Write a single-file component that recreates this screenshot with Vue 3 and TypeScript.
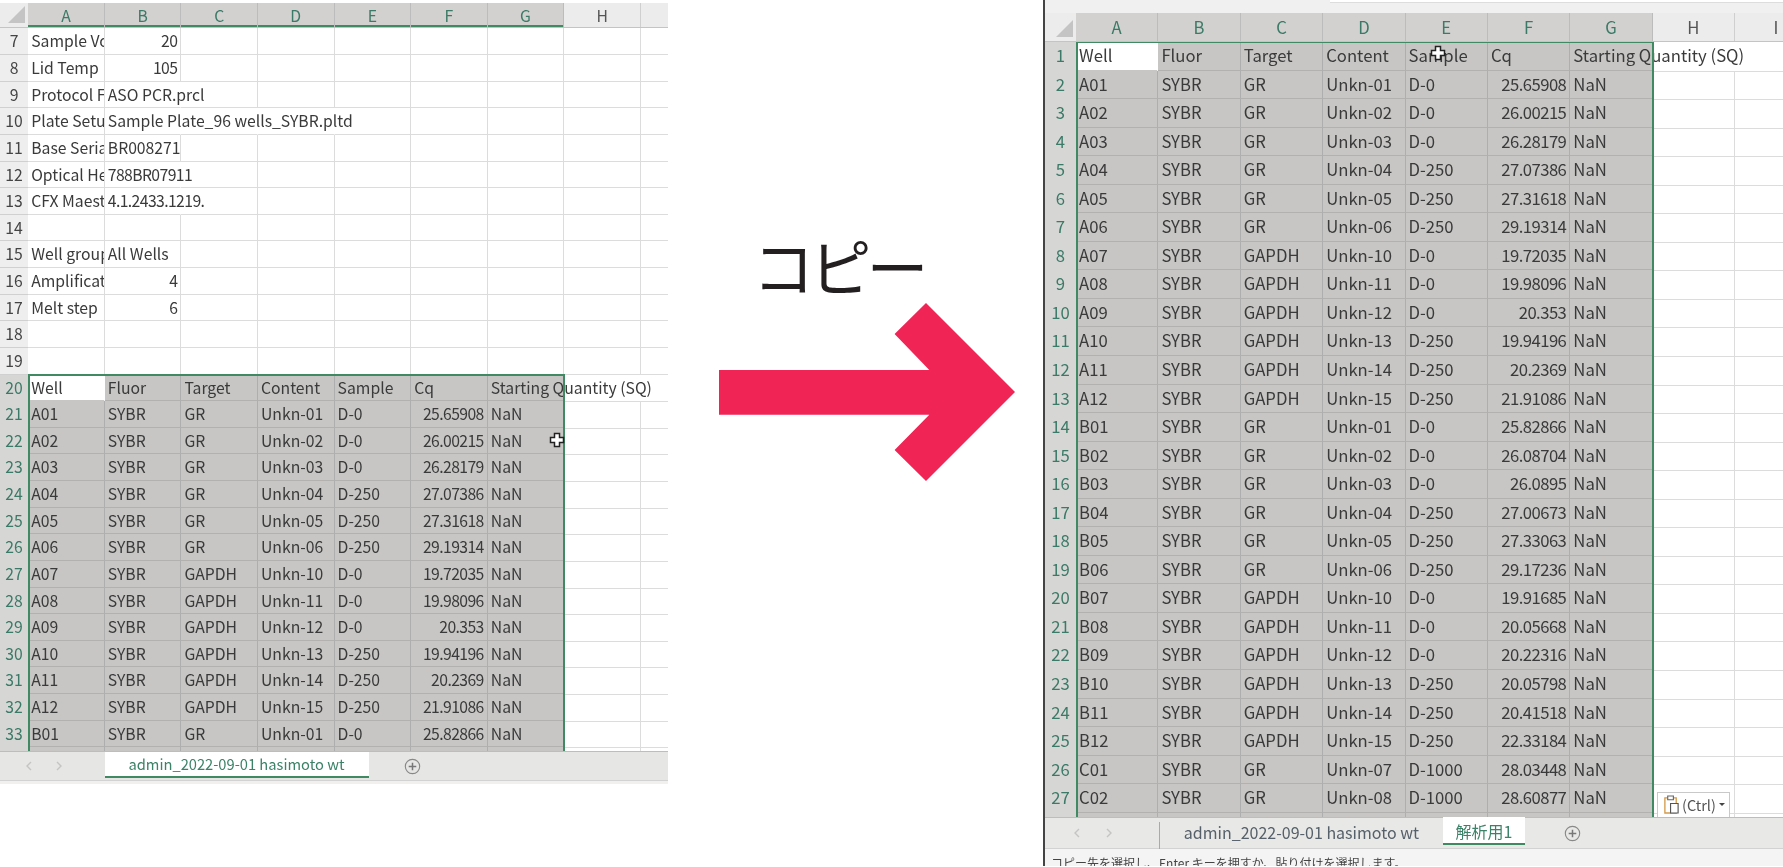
<script setup lang="ts">
type Sheet = {
  id: string
  cols: string[]
  colCount: number
  firstRow: number
  selStart: number
  charW: number
  colW: number
  rows: string[][]
  tabs: string[]
}

const d = (w: string, t: string, c: string, s: string, q: string) => [w, 'SYBR', t, `Unkn-${c}`, s, q, 'NaN']
const headers = ['Well', 'Fluor', 'Target', 'Content', 'Sample', 'Cq', 'Starting Quantity (SQ)']
const wells = [
  d('A01', 'GR', '01', 'D-0', '25.65908'),
  d('A02', 'GR', '02', 'D-0', '26.00215'),
  d('A03', 'GR', '03', 'D-0', '26.28179'),
  d('A04', 'GR', '04', 'D-250', '27.07386'),
  d('A05', 'GR', '05', 'D-250', '27.31618'),
  d('A06', 'GR', '06', 'D-250', '29.19314'),
  d('A07', 'GAPDH', '10', 'D-0', '19.72035'),
  d('A08', 'GAPDH', '11', 'D-0', '19.98096'),
  d('A09', 'GAPDH', '12', 'D-0', '20.353'),
  d('A10', 'GAPDH', '13', 'D-250', '19.94196'),
  d('A11', 'GAPDH', '14', 'D-250', '20.2369'),
  d('A12', 'GAPDH', '15', 'D-250', '21.91086'),
  d('B01', 'GR', '01', 'D-0', '25.82866'),
  d('B02', 'GR', '02', 'D-0', '26.08704'),
  d('B03', 'GR', '03', 'D-0', '26.0895'),
  d('B04', 'GR', '04', 'D-250', '27.00673'),
  d('B05', 'GR', '05', 'D-250', '27.33063'),
  d('B06', 'GR', '06', 'D-250', '29.17236'),
  d('B07', 'GAPDH', '10', 'D-0', '19.91685'),
  d('B08', 'GAPDH', '11', 'D-0', '20.05668'),
  d('B09', 'GAPDH', '12', 'D-0', '20.22316'),
  d('B10', 'GAPDH', '13', 'D-250', '20.05798'),
  d('B11', 'GAPDH', '14', 'D-250', '20.41518'),
  d('B12', 'GAPDH', '15', 'D-250', '22.33184'),
  d('C01', 'GR', '07', 'D-1000', '28.03448'),
  d('C02', 'GR', '08', 'D-1000', '28.60877'),
]
const blank = ['', '', '', '', '', '', '']
const meta = [
  ['Sample Volume', '20'],
  ['Lid Temp', '105'],
  ['Protocol File Name', 'ASO PCR.prcl'],
  ['Plate Setup File Name', 'Sample Plate_96 wells_SYBR.pltd'],
  ['Base Serial Number', 'BR008271'],
  ['Optical Head Serial', '788BR07911'],
  ['CFX Maestro Version', '4.1.2433.1219.'],
  [],
  ['Well group', 'All Wells'],
  ['Amplification step', '4'],
  ['Melt step', '6'],
  [],
  [],
]

const sheets: Sheet[] = [
  {
    id: 'left',
    cols: ['A', 'B', 'C', 'D', 'E', 'F', 'G', 'H', ''],
    colCount: 9,
    firstRow: 7,
    selStart: 20,
    charW: 8,
    colW: 76.6,
    rows: [...meta, headers, ...wells.slice(0, 13), blank],
    tabs: ['admin_2022-09-01 hasimoto wt'],
  },
  {
    id: 'right',
    cols: ['A', 'B', 'C', 'D', 'E', 'F', 'G', 'H', 'I'],
    colCount: 9,
    firstRow: 1,
    selStart: 1,
    charW: 8.5,
    colW: 82.4,
    rows: [headers, ...wells, blank],
    tabs: ['admin_2022-09-01 hasimoto wt', '解析用1'],
  },
]

const isNum = (v: string) => /^\d+(\.\d+)?$/.test(v)
const digits = (v: string) => /^\d/.test(v)
const cellsOf = (r: string[], n: number) => Array.from({ length: n }, (_, i) => r[i] ?? '')
const clipped = (r: string[], i: number) => !!r[i + 1]

// A long text runs over the empty cells to its right, and hides their dividing lines.
const spilled = (s: Sheet, r: string[], ci: number) => {
  if (r[ci + 1]) return false
  for (let j = ci; j >= 0; j--) {
    const v = r[j]
    if (v) return !isNum(v) && v.length * s.charW > (ci - j + 1) * s.colW
  }
  return false
}
</script>

<template>
  <div class="page">
    <template v-for="(s, si) in sheets" :key="s.id">
      <section class="panel" :class="s.id">
        <div v-if="s.id === 'right'" class="formula"><span class="formula-input"></span></div>
        <div class="sheet">
          <div class="line head">
            <div class="corner"><i></i></div>
            <div
              v-for="(c, ci) in s.cols"
              :key="ci"
              class="col"
              :class="{ on: ci < 7 }"
            >{{ c }}</div>
          </div>
          <div class="body">
            <div
              v-for="(r, ri) in s.rows"
              :key="ri"
              class="line row"
              :class="{ sel: ri + s.firstRow >= s.selStart }"
            >
              <div class="num">{{ ri + s.firstRow }}</div>
              <div
                v-for="(v, ci) in cellsOf(r, s.colCount)"
                :key="ci"
                class="cell"
                :class="{
                  right: isNum(v),
                  tight: digits(v),
                  clip: clipped(r, ci),
                  selc: ci < 7 && ri + s.firstRow >= s.selStart,
                  active: ci === 0 && ri + s.firstRow === s.selStart,
                  spill: spilled(s, r, ci),
                }"
              >{{ v }}</div>
            </div>
            <div class="selection"></div>
            <svg class="cursor" viewBox="0 0 16 16" aria-hidden="true">
              <path d="M5.5 1.500h5v4h4v5h-4v4h-5v-4h-4v-5h4z" fill="#fff" stroke="#222" stroke-width="1.5" />
            </svg>
            <div v-if="s.id === 'right'" class="paste">
              <svg viewBox="0 0 18 22" class="clip-ic" aria-hidden="true">
                <path d="M2 4h12v16H2z" fill="#fff" stroke="#d49a4a" stroke-width="1.4" />
                <path d="M5 2h6v4H5z" fill="#fff" stroke="#666" stroke-width="1.2" />
                <path d="M8 10h8v10H8z" fill="#fff" stroke="#555" stroke-width="1.2" />
              </svg>
              <span>(Ctrl)</span>
              <b></b>
            </div>
          </div>
        </div>
        <div class="tabbar">
          <div class="nav">
            <svg viewBox="0 0 6 10" aria-hidden="true"><path d="M5 1 1 5l4 4" fill="none" stroke="#c4c4c4" stroke-width="1.4" /></svg>
            <svg viewBox="0 0 6 10" aria-hidden="true"><path d="m1 1 4 4-4 4" fill="none" stroke="#c4c4c4" stroke-width="1.4" /></svg>
          </div>
          <div class="tabs">
            <div
              v-for="(t, ti) in s.tabs"
              :key="ti"
              class="tab"
              :class="{ current: ti === s.tabs.length - 1 }"
            >{{ t }}</div>
          </div>
          <svg class="plus" viewBox="0 0 18 18" aria-hidden="true">
            <circle cx="9" cy="9" r="7.6" fill="none" stroke="#888" stroke-width="1.2" />
            <path d="M9 5v8M5 9h8" stroke="#777" stroke-width="1.6" />
          </svg>
        </div>
        <div class="status">
          <span v-if="s.id === 'right'">コピー先を選択し、Enter キーを押すか、貼り付けを選択します。</span>
        </div>
      </section>

      <div v-if="si === 0" class="middle">
        <div class="copy">コピー</div>
        <svg class="arrow" viewBox="0 0 297 179" aria-hidden="true">
          <path d="M0 67h210.300L175.600 31 207 0l89 89-89 89-31.400-31 34.700-35.300H0z" fill="#f02455" />
        </svg>
      </div>
    </template>
  </div>
</template>

<style>
html,
body {
  margin: 0;
  background: #fff;
  overflow: hidden;
}
</style>

<style scoped>
.page {
  display: flex;
  width: 1783px;
  height: 867px;
  overflow: hidden;
  align-items: flex-start;
  font-family: "Noto Sans CJK JP", "Noto Sans", sans-serif;
  color: #3a3a3a;
}

.panel {
  flex: none;
  display: flex;
  flex-direction: column;
  filter: blur(0.55px);
}
.panel.left {
  --rowh: 26.63px;
  --colw: 76.6px;
  --numw: 28.2px;
  --headh: 25.4px;
  --bodyh: 723px;
  --fs: 15.75px;
  --tight: -0.6px;
  --tabfs: 14.7px;
  width: 668px;
  margin-top: 3px;
}
.panel.right {
  --rowh: 28.55px;
  --colw: 82.4px;
  --numw: 31px;
  --headh: 28.5px;
  --bodyh: 776px;
  --fs: 16.7px;
  --tight: -0.55px;
  --tabfs: 16px;
  width: 738px;
  height: 866px;
  border-left: 2px solid #444;
  background: #f1f1f1;
}

.formula {
  height: 13.5px;
  padding-left: 285px;
  background: #f0f0f0;
}
.formula-input {
  display: block;
  height: 2px;
  background: #fff;
  border-bottom: 1px solid #ddd;
}

.sheet {
  background: #fff;
  overflow: hidden;
}
.line {
  display: grid;
  grid-template-columns: var(--numw) repeat(9, var(--colw));
  font-size: var(--fs);
}
.head {
  height: var(--headh);
  background: #ececec;
  border-bottom: 1px solid #c4c4c4;
  box-sizing: border-box;
}
.corner {
  position: relative;
  background: #ececec;
}
.corner i {
  position: absolute;
  right: 3px;
  bottom: 4px;
  width: 0;
  height: 0;
  border-style: solid;
  border-width: 0 0 17px 17px;
  border-color: transparent transparent #c4c4c4 transparent;
}
.col {
  display: flex;
  align-items: center;
  justify-content: center;
  border-right: 1px solid #cfcfcf;
  color: #555;
}
.col.on {
  background: #d2d1d0;
  color: #3b7a66;
  border-right-color: #bcbcbc;
}

.body {
  position: relative;
  height: var(--bodyh);
  overflow: hidden;
}
.row {
  height: var(--rowh);
  line-height: calc(var(--rowh) - 1px);
}
.num {
  background: #eeeeee;
  border-bottom: 1px solid #d0d0d0;
  text-align: center;
  color: #444;
  box-sizing: border-box;
}
.row.sel .num {
  background: #d6d6d5;
  color: #3b7a66;
  border-bottom-color: #bdbdbd;
}
.cell {
  box-sizing: border-box;
  min-width: 0;
  padding: 0 3px;
  white-space: nowrap;
  border-right: 1px solid #dcdcdc;
  border-bottom: 1px solid #dcdcdc;
}
.cell.right {
  text-align: right;
}
.cell.tight {
  letter-spacing: var(--tight);
}
.cell.clip {
  overflow: hidden;
  text-overflow: clip;
}
.cell.spill {
  border-right-color: transparent;
}
.cell.selc {
  background: #c7c6c5;
  border-right-color: #aeaeae;
  border-bottom: 2px solid #b2b1b0;
}
.cell.selc.spill {
  border-right-color: #c7c6c5;
}
.cell.active {
  background: #fff;
  border-right-color: #fff;
  border-bottom-color: #c7c6c5;
}

.selection {
  position: absolute;
  box-sizing: border-box;
  left: var(--numw);
  width: calc(var(--colw) * 7 + 1px);
  bottom: -4px;
  border: 2px solid #3f8a63;
  pointer-events: none;
}
.left .selection {
  top: calc(var(--rowh) * 13 - 1px);
}
.right .selection {
  top: -1px;
}
.left .head .col.on {
  box-shadow: inset 0 -2px 0 #3f8a63;
}

.cursor {
  position: absolute;
  width: 16px;
  height: 16px;
}
.left .cursor {
  left: 549px;
  top: 404px;
}
.right .cursor {
  left: 385px;
  top: 3px;
}

.paste {
  position: absolute;
  left: 612px;
  top: 750px;
  width: 73px;
  height: 26px;
  box-sizing: border-box;
  border: 1px solid #c9c9c9;
  background: #fff;
  display: flex;
  align-items: center;
  gap: 2px;
  padding-left: 5px;
  font-size: 14.5px;
  color: #555;
}
.clip-ic {
  width: 17px;
  height: 21px;
  flex: none;
}
.paste b {
  width: 0;
  height: 0;
  margin-left: 1px;
  border-style: solid;
  border-width: 3px 3px 0 3px;
  border-color: #444 transparent transparent transparent;
}

.tabbar {
  display: flex;
  align-items: flex-start;
  background: #e6e6e5;
  border-top: 1px solid #bdbdbd;
  font-size: var(--tabfs);
  box-sizing: border-box;
}
.left .tabbar {
  height: 30px;
  border-bottom: 1px solid #d2d2d2;
}
.right .tabbar {
  height: 32px;
  background: #e8e8e7;
  border-bottom: 1px solid #d2d2d2;
}
.nav {
  display: flex;
  align-items: center;
  flex: none;
}
.nav svg {
  width: 6px;
  height: 10px;
}
.left .nav {
  width: 104.5px;
  height: 28px;
  padding-left: 25.5px;
  gap: 24.5px;
  box-sizing: border-box;
}
.right .nav {
  width: 114px;
  height: 30px;
  padding-left: 29px;
  gap: 26px;
  box-sizing: border-box;
  border-right: 0;
}
.tabs {
  display: flex;
}
.tab {
  box-sizing: border-box;
  text-align: center;
  white-space: nowrap;
  color: #55606a;
}
.left .tab {
  width: 264px;
  height: 26px;
  line-height: 24px;
}
.right .tab {
  width: 284px;
  height: 27px;
  margin-top: 4px;
  line-height: 21px;
  border-left: 1px solid #aaa;
}
.right .tab.current {
  width: 82px;
  margin-top: -1px;
  height: 28px;
  line-height: 29px;
  border-left: 0;
}
.tab.current {
  background: #fff;
  color: #3b8268;
  border-bottom: 2px solid #3f8a63;
}
.plus {
  width: 17px;
  height: 17px;
  flex: none;
}
.left .plus {
  margin: 6px 0 0 35px;
}
.right .plus {
  margin: 7px 0 0 39px;
}

.status {
  height: 3px;
  background: #f2f0ec;
}
.right .status {
  height: 17px;
  overflow: hidden;
  background: #f4f4f4;
  padding-left: 6px;
  font-size: 12px;
  line-height: 27px;
  color: #444;
  white-space: nowrap;
}

.middle {
  flex: none;
  width: 375px;
  height: 867px;
  box-sizing: border-box;
  padding: 228px 0 0 50.5px;
}
.copy {
  font-size: 62px;
  line-height: 75px;
  margin-left: 34px;
  letter-spacing: -5px;
  color: #231f20;
  white-space: nowrap;
}
.arrow {
  display: block;
  width: 297px;
  height: 179px;
}
</style>
